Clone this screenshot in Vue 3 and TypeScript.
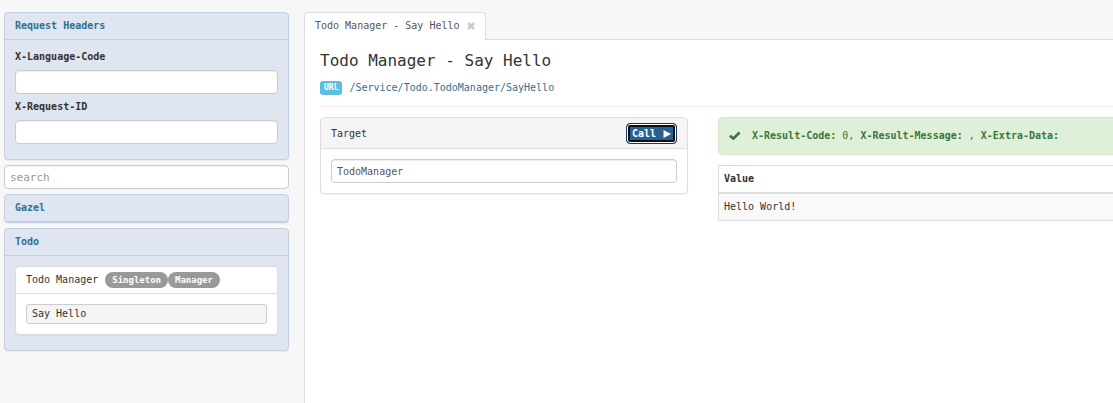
<script setup lang="ts">
import { ref } from 'vue'

interface Header {
  id: string
  name: string
  value: string
}

const headers = ref<Header[]>([
  { id: 'header-language', name: 'X-Language-Code', value: '' },
  { id: 'header-request', name: 'X-Request-ID', value: '' },
])
const search = ref('')
const target = ref('TodoManager')
const badges: string[] = ['Singleton', 'Manager']
const columns: string[] = ['Value']
const rows: string[][] = [['Hello World!']]
</script>

<template>
  <div class="page">
    <aside class="sidebar">
      <section class="panel blue">
        <h2 class="panel-heading"><a href="#headers">Request Headers</a></h2>
        <div class="headers">
          <div v-for="h in headers" :key="h.id" class="field">
            <label :for="h.id">{{ h.name }}</label>
            <input :id="h.id" v-model="h.value" class="control" type="text" />
          </div>
        </div>
      </section>
      <input v-model="search" class="control search" type="text" placeholder="search" aria-label="search" />
      <section class="panel blue">
        <h2 class="panel-heading"><a href="#gazel">Gazel</a></h2>
      </section>
      <section class="panel blue">
        <h2 class="panel-heading"><a href="#todo">Todo</a></h2>
        <div class="module">
          <div class="panel">
            <div class="service">
              <span>Todo Manager</span>
              <span class="badges"><span v-for="b in badges" :key="b" class="badge">{{ b }}</span></span>
            </div>
            <div class="panel-body">
              <button type="button" class="operation">Say Hello</button>
            </div>
          </div>
        </div>
      </section>
    </aside>

    <main class="main">
      <nav class="tabs">
        <div class="tab">
          <a href="#say-hello">Todo Manager - Say Hello</a>
          <button type="button" class="close" aria-label="Close tab">
            <svg viewBox="0 0 8 8" width="8" height="8"><path d="M1 1 7 7M7 1 1 7" stroke="currentColor" stroke-width="2.8" /></svg>
          </button>
        </div>
      </nav>
      <div class="content">
        <h1>Todo Manager - Say Hello</h1>
        <div class="url">
          <span class="label">URL</span>
          <a href="#url">/Service/Todo.TodoManager/SayHello</a>
        </div>
        <div class="columns">
          <section class="panel">
            <div class="target-heading">
              <label for="target">Target</label>
              <button type="button" class="call">
                Call
                <svg viewBox="0 0 8 8" width="8" height="8"><path d="M.5 0 8 4 .5 8Z" fill="currentColor" /></svg>
              </button>
            </div>
            <div class="panel-body">
              <input id="target" v-model="target" class="control" type="text" />
            </div>
          </section>
          <section class="result">
            <div class="alert" role="status">
              <svg viewBox="0 0 12 10" width="12" height="10"><path d="M0 5.8 2 3.8 4.4 5.8 9.6 .6 11.5 2.4 4.6 9.2Z" fill="currentColor" /></svg>
              <span><b>X-Result-Code:</b> 0, <b>X-Result-Message:</b> , <b>X-Extra-Data:</b></span>
            </div>
            <table>
              <thead>
                <tr><th v-for="c in columns" :key="c" scope="col">{{ c }}</th></tr>
              </thead>
              <tbody>
                <tr v-for="(row, i) in rows" :key="i"><td v-for="(cell, j) in row" :key="j">{{ cell }}</td></tr>
              </tbody>
            </table>
          </section>
        </div>
      </div>
    </main>
  </div>
</template>

<style>
body {
  margin: 0;
  background: #f7f7f7;
}
</style>

<style scoped>
.page,
.page * {
  box-sizing: border-box;
}
.page {
  display: flex;
  gap: 15px;
  min-height: 100vh;
  padding: 12px 0 0 4px;
  font-family: "DejaVu Sans Mono", "Liberation Mono", monospace;
  font-size: 10px;
  line-height: 16px;
  color: #333;
}
a {
  color: #31708f;
  text-decoration: none;
}
svg {
  display: block;
  flex: none;
}
button,
input {
  font: inherit;
}
.sidebar {
  flex: 0 0 285px;
  display: flex;
  flex-direction: column;
  gap: 5px;
}
.panel {
  background: #fff;
  border: 1px solid #ddd;
  border-radius: 4px;
  box-shadow: 0 1px 1px rgba(0, 0, 0, 0.05);
}
.panel.blue {
  background: #dfe5f1;
  border-color: #c3cfe4;
}
.panel-heading {
  margin: 0;
  padding: 5px 10px;
  border-bottom: 1px solid #c3cfe4;
  font-size: 10px;
  line-height: 16px;
  font-weight: 700;
}
.panel-body {
  padding: 10px;
}
.headers {
  display: flex;
  flex-direction: column;
  gap: 5px;
  padding: 9px 10px 15px;
}
.field {
  display: flex;
  flex-direction: column;
  gap: 5px;
}
.field label {
  font-weight: 700;
}
.control {
  display: block;
  width: 100%;
  height: 24px;
  margin: 0;
  padding: 0 5px;
  border: 1px solid #ccc;
  border-radius: 4px;
  background: #fff;
  box-shadow: inset 0 1px 1px rgba(0, 0, 0, 0.075);
  color: #555;
}
.control::placeholder {
  color: #999;
  opacity: 1;
}
.search {
  font-size: 11px;
}
.module {
  padding: 10px 10px 15px;
}
.service {
  display: flex;
  align-items: center;
  gap: 7px;
  padding: 5px 10px;
  border-bottom: 1px solid #ddd;
}
.badges {
  display: flex;
}
.badge {
  padding: 0 7px;
  border-radius: 8px;
  background: #999;
  color: #fff;
  font-size: 9px;
  font-weight: 700;
}
.operation {
  display: block;
  width: 100%;
  height: 20px;
  padding: 0 5px;
  border: 1px solid #ccc;
  border-radius: 3px;
  background: #f5f5f5;
  color: #333;
  text-align: left;
}
.main {
  flex: 1;
  min-width: 0;
  display: flex;
  flex-direction: column;
}
.tabs {
  display: flex;
  border-bottom: 1px solid #ddd;
}
.tab {
  display: flex;
  align-items: center;
  gap: 7px;
  margin-bottom: -1px;
  padding: 5px 10px 6px;
  border: 1px solid #ddd;
  border-bottom: 0;
  border-radius: 4px 4px 0 0;
  background: #fff;
}
.tab a {
  color: #555;
}
.close {
  padding: 0;
  border: 0;
  background: none;
  color: #ccc;
}
.content {
  flex: 1;
  padding: 10px 0 0 15px;
  border-left: 1px solid #ddd;
  background: #fff;
}
h1 {
  margin: 0;
  font-size: 16px;
  line-height: 22px;
  font-weight: 400;
}
.url {
  display: flex;
  align-items: center;
  gap: 7px;
  padding: 8px 0 10px;
  margin-bottom: 10px;
  border-bottom: 1px solid #eee;
}
.label {
  padding: 0 4px;
  border-radius: 3px;
  background: #5bc0de;
  color: #fff;
  font-size: 8px;
  line-height: 14px;
  font-weight: 700;
}
.columns {
  display: grid;
  grid-template-columns: 368fr 395fr;
  gap: 30px;
  align-items: start;
}
.target-heading {
  display: flex;
  align-items: center;
  justify-content: space-between;
  padding: 5px 10px 4px;
  border-bottom: 1px solid #ddd;
  border-radius: 3px 3px 0 0;
  background: #f5f5f5;
}
.call {
  display: flex;
  align-items: center;
  gap: 7px;
  height: 21px;
  padding: 0 5px;
  border: 1px solid #1b365d;
  border-radius: 4px;
  background: #286090;
  box-shadow: inset 0 0 0 1px #fff, inset 0 0 0 3px #101010;
  color: #fff;
  font-weight: 700;
}
.result {
  min-width: 0;
}
.alert {
  display: flex;
  align-items: center;
  gap: 11px;
  margin-bottom: 10px;
  padding: 10px;
  border: 1px solid #d6e9c6;
  border-right: 0;
  border-radius: 4px 0 0 4px;
  background: #dff0d8;
  color: #3c763d;
}
table {
  width: 100%;
  border-collapse: separate;
  border-spacing: 0;
  border: 1px solid #ddd;
  border-right: 0;
}
th,
td {
  padding: 5px;
  text-align: left;
}
th {
  border-bottom: 2px solid #ddd;
}
td {
  background: #f9f9f9;
}
</style>
